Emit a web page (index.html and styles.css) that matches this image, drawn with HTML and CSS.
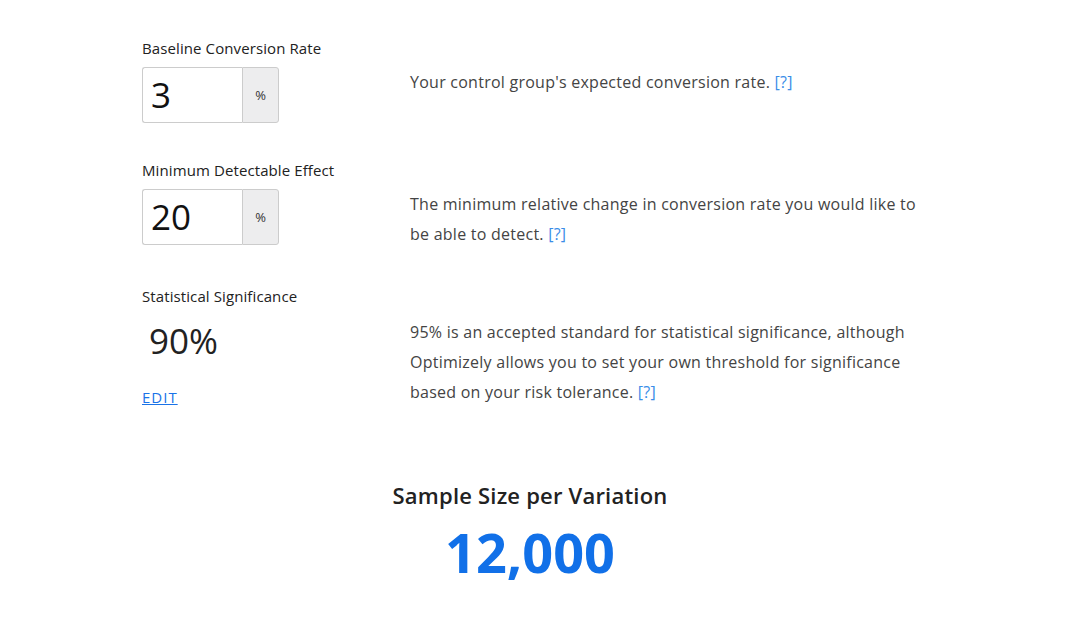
FILE: index.html
```html
<!DOCTYPE html>
<html lang="en">
<head>
    <meta charset="UTF-8">
    <title>Sample Size Calculator</title>
    <link rel="stylesheet" href="styles.css">
</head>
<body>
    <div class="calculator">
        <div class="field-row">
            <div class="field-input">
                <div class="field-label">Baseline Conversion Rate</div>
                <div class="input-group">
                    <div class="input-box">3</div>
                    <div class="input-addon">%</div>
                </div>
            </div>
            <div class="field-help">
                Your control group's expected conversion rate. <a href="#" class="help-link">[?]</a>
            </div>
        </div>

        <div class="field-row">
            <div class="field-input">
                <div class="field-label">Minimum Detectable Effect</div>
                <div class="input-group">
                    <div class="input-box">20</div>
                    <div class="input-addon">%</div>
                </div>
            </div>
            <div class="field-help">
                The minimum relative change in conversion rate you would like to be able to detect. <a href="#" class="help-link">[?]</a>
            </div>
        </div>

        <div class="field-row">
            <div class="field-input">
                <div class="field-label">Statistical Significance</div>
                <div class="significance-value">90%</div>
                <a href="#" class="edit-link">EDIT</a>
            </div>
            <div class="field-help significance-help">
                95% is an accepted standard for statistical significance, although Optimizely allows you to set your own threshold for significance based on your risk tolerance. <a href="#" class="help-link">[?]</a>
            </div>
        </div>

        <div class="result">
            <div class="result-title">Sample Size per Variation</div>
            <div class="result-value">12,000</div>
        </div>
    </div>
</body>
</html>
```

FILE: styles.css
```css
* {
    margin: 0;
    padding: 0;
    box-sizing: border-box;
}

body {
    font-family: 'Open Sans', 'Lato', sans-serif;
    background: #fff;
    color: #222;
}

.calculator {
    width: 776px;
    margin-left: 142px;
    padding-top: 38px;
}

.field-row {
    display: flex;
    margin-bottom: 37px;
}

.field-input {
    width: 268px;
    flex-shrink: 0;
}

.field-label {
    font-size: 15px;
    line-height: 20px;
    letter-spacing: 0.1px;
    color: #222;
    margin-bottom: 9px;
}

.input-group {
    display: flex;
    width: 137px;
    height: 56px;
}

.input-box {
    width: 100px;
    height: 100%;
    border: 1px solid #ccc;
    border-right: none;
    border-radius: 3px 0 0 3px;
    font-size: 35px;
    line-height: 54px;
    padding-left: 8px;
    color: #111;
}

.input-addon {
    width: 37px;
    height: 100%;
    background: #ededee;
    border: 1px solid #ccc;
    border-radius: 0 3px 3px 0;
    font-size: 13px;
    display: flex;
    align-items: center;
    justify-content: center;
    color: #333;
}

.field-help {
    padding-top: 29px;
    font-size: 16px;
    line-height: 30px;
    letter-spacing: 0.25px;
    color: #444;
}

.significance-help {
    padding-top: 31px;
}

.help-link {
    color: #3a8de8;
    text-decoration: none;
}

.significance-value {
    font-size: 35px;
    line-height: 52px;
    margin-top: 9px;
    padding-left: 7px;
    color: #222;
}

.edit-link {
    display: inline-block;
    margin-top: 20px;
    font-size: 15px;
    line-height: 20px;
    letter-spacing: 1px;
    color: #1a73e8;
}

.result {
    text-align: center;
    margin-top: 72px;
}

.result-title {
    font-size: 22px;
    line-height: 30px;
    font-weight: 600;
    letter-spacing: 0.2px;
    color: #222;
}

.result-value {
    margin-top: 10px;
    font-size: 54px;
    line-height: 64px;
    font-weight: bold;
    color: #1170e8;
}
```
